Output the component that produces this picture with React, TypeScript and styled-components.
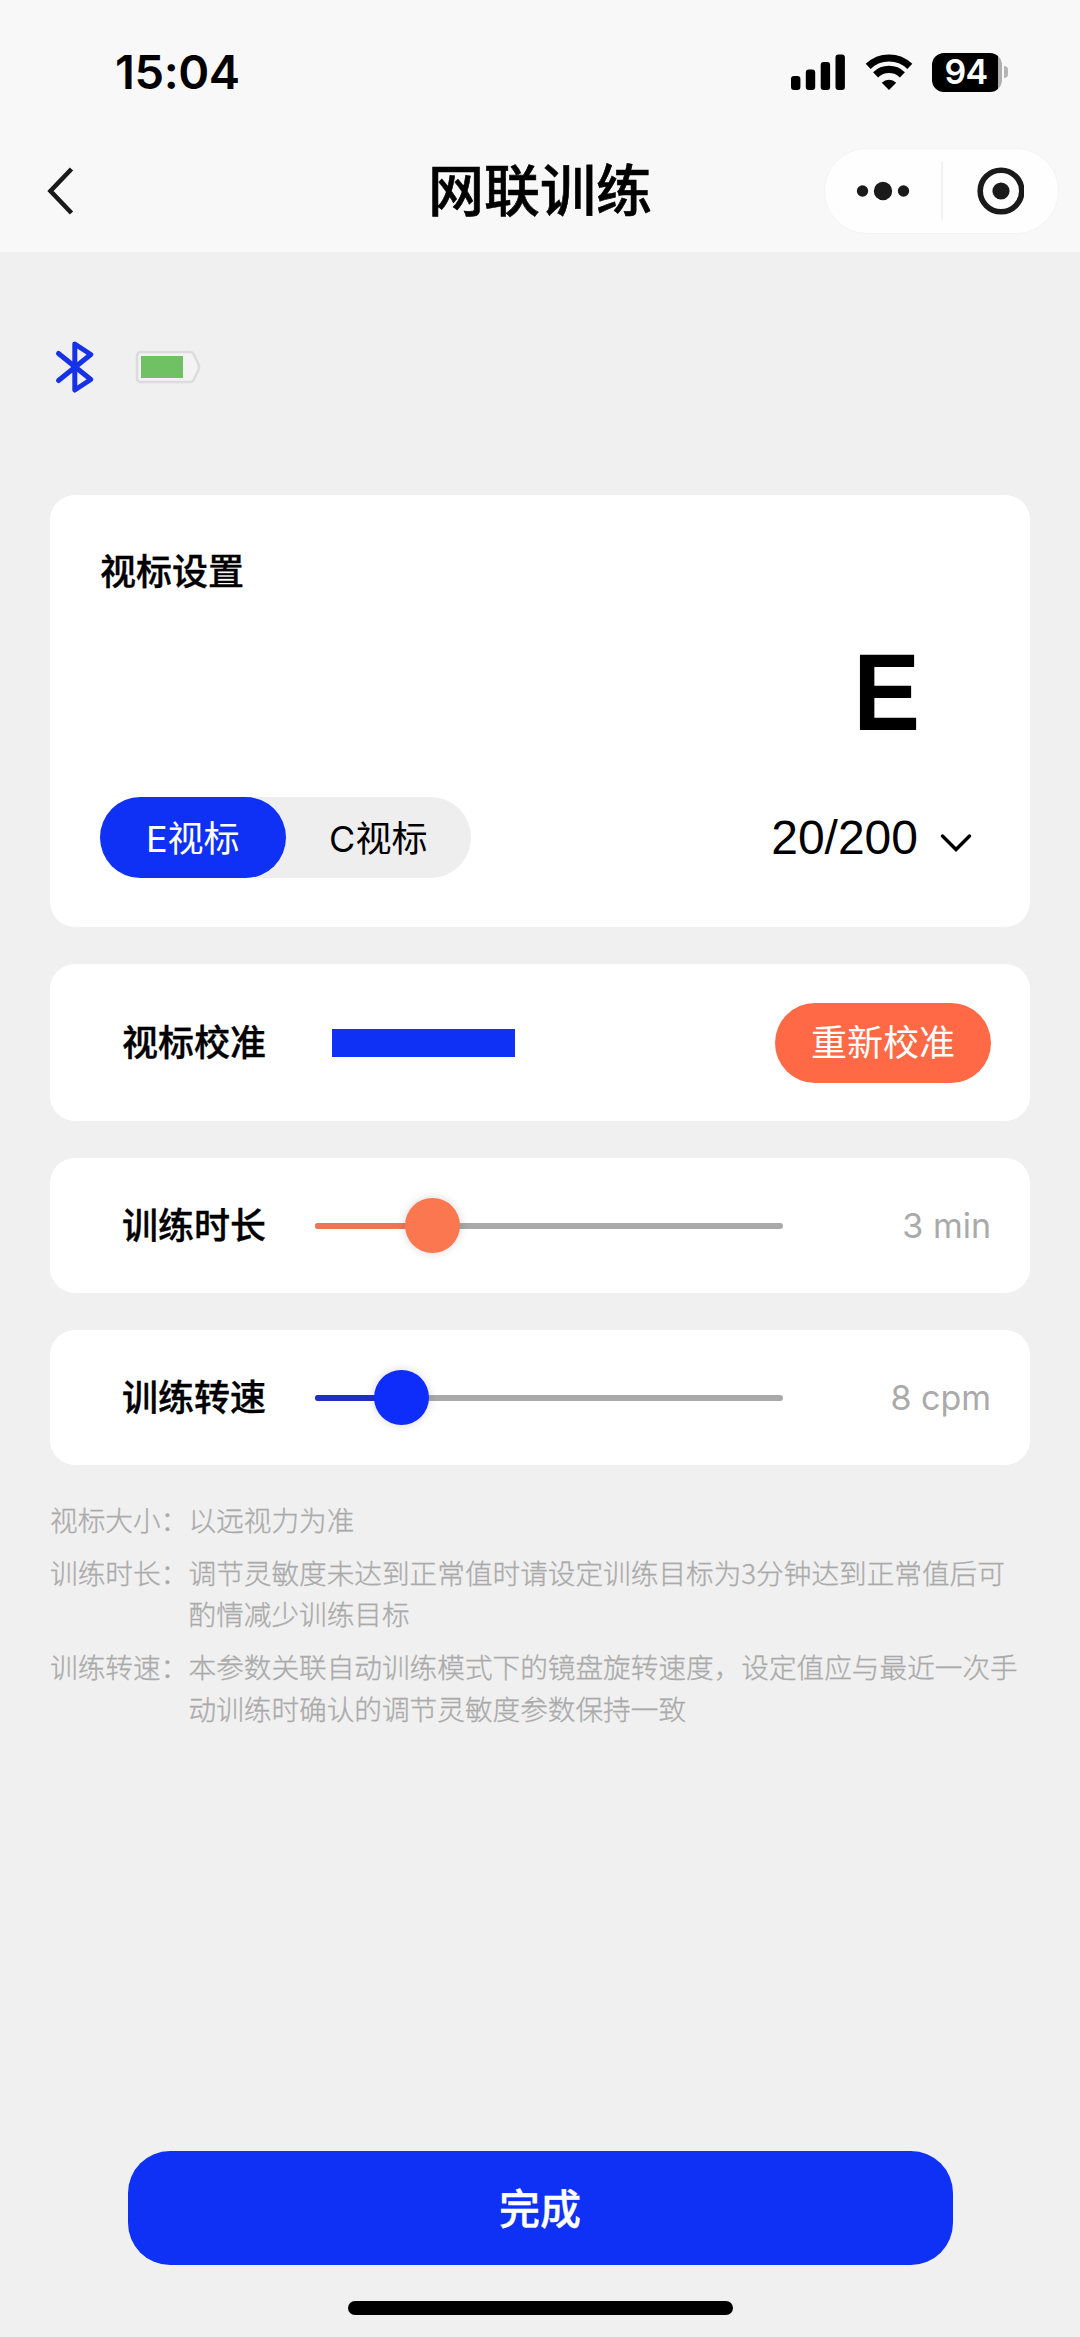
import React from "react";
import styled, { createGlobalStyle } from "styled-components";

const BLUE = "#0f31f6";
const GREY = "#aaaaaa";

const GlobalStyle = createGlobalStyle`
  *, *::before, *::after { box-sizing: border-box; }
  body {
    margin: 0;
    background: #f0f0f0;
    color: #000;
    font-family: "Liberation Sans", "Noto Sans CJK SC", sans-serif;
  }
  button { border: 0; padding: 0; font: inherit; background: none; color: inherit; }
`;

const Screen = styled.div`
  display: flex;
  flex-direction: column;
  width: 1080px;
  height: 2337px;
  background: #f0f0f0;
`;

const Header = styled.header`
  height: 252px;
  background: #f8f8f8;
`;

const StatusBar = styled.div`
  display: flex;
  align-items: center;
  justify-content: space-between;
  height: 128px;
  padding: 16px 72px 0 115px;
`;

const Clock = styled.time`
  padding-bottom: 1px;
  font: 600 47px/1 Inter, sans-serif;
  letter-spacing: -0.4px;
`;

const StatusIcons = styled.div`
  display: flex;
  align-items: center;
`;

const SignalIcon = styled.svg`
  width: 54px;
  height: 36px;
  margin-right: 20px;
`;

const WifiIcon = styled.svg`
  width: 48px;
  height: 36px;
  margin-right: 19px;
`;

const PhoneBattery = styled.div`
  display: flex;
  align-items: center;
  gap: 2px;
`;

const BatteryBody = styled.div`
  display: flex;
  align-items: center;
  justify-content: center;
  width: 70px;
  height: 39px;
  padding-right: 2px;
  border-radius: 12px;
  background: linear-gradient(to right, #000 66px, #aeaeae 66px);
  color: #fff;
  font: 600 34px/1 Inter, sans-serif;
  letter-spacing: -0.6px;
`;

const BatteryTip = styled.div`
  width: 4px;
  height: 12px;
  border-radius: 0 5px 5px 0;
  background: #b4b4b4;
`;

const NavBar = styled.div`
  display: grid;
  grid-template-columns: 1fr auto 1fr;
  align-items: center;
  height: 125px;
  padding: 0 21px 0 46px;
`;

const BackButton = styled.button`
  justify-self: start;
  display: flex;
`;

const BackIcon = styled.svg`
  width: 30px;
  height: 50px;
`;

const PageTitle = styled.h1`
  margin: 3px 25px 0 0;
  font-size: 56px;
  line-height: 70px;
  font-weight: 500;
  -webkit-text-stroke: 0.6px #000;
`;

const Capsule = styled.div`
  justify-self: end;
  display: flex;
  align-items: center;
  width: 235px;
  height: 86px;
  border: 1px solid #f4f4f4;
  border-radius: 43px;
  background: #fefefe;
`;

const CapsuleButton = styled.button`
  display: flex;
  flex: 1;
  justify-content: center;
`;

const CapsuleDivider = styled.div`
  width: 2px;
  height: 58px;
  background: #f1f1f1;
`;

const DotsIcon = styled.svg`
  width: 54px;
  height: 20px;
`;

const TargetIcon = styled.svg`
  width: 48px;
  height: 48px;
`;

const Main = styled.main`
  display: flex;
  flex: 1;
  flex-direction: column;
  padding: 0 50px;
`;

const DeviceStatus = styled.div`
  display: flex;
  align-items: center;
  gap: 40px;
  height: 243px;
  padding: 0 0 14px 4px;
`;

const BluetoothIcon = styled.svg`
  width: 41px;
  height: 54px;
`;

const DeviceBattery = styled.svg`
  width: 66px;
  height: 34px;
`;

const Cards = styled.div`
  display: flex;
  flex-direction: column;
  gap: 37px;
`;

const Card = styled.section`
  border-radius: 25px;
  background: #fff;
`;

const OptotypeCard = styled(Card)`
  display: flex;
  flex-direction: column;
  height: 432px;
  padding: 52px 50px 49px;
`;

const RowCard = styled(Card)<{ $height: number }>`
  display: flex;
  align-items: center;
  height: ${(p) => p.$height}px;
  padding: 0 39px 0 72px;
`;

const CardTitle = styled.h2`
  margin: 0;
  font-size: 36px;
  line-height: 52px;
  font-weight: 500;
  -webkit-text-stroke: 0.35px #000;
`;

const RowLabel = styled(CardTitle)`
  flex: none;
  width: 145px;
  padding-top: 2px;
`;

const Preview = styled.div`
  align-self: flex-end;
  width: 73px;
  margin: 38px 57px 0 0;
  font-size: 110px;
  line-height: 110px;
  font-weight: 700;
  transform: scaleX(0.91);
`;

const OptotypeControls = styled.div`
  display: flex;
  align-items: center;
  justify-content: space-between;
  margin-top: auto;
`;

const Segments = styled.div`
  display: flex;
  width: 371px;
  height: 81px;
  border-radius: 41px;
  background: #eeeeee;
`;

const Segment = styled.button<{ $active?: boolean }>`
  flex: 1;
  padding-bottom: 4px;
  border-radius: 41px;
  background: ${(p) => (p.$active ? BLUE : "transparent")};
  color: ${(p) => (p.$active ? "#fff" : "#000")};
  font-family: Inter, "Noto Sans CJK SC", sans-serif;
  font-size: 36px;
`;

const SizeSelect = styled.button`
  display: flex;
  align-items: center;
  gap: 22px;
  margin-right: 8px;
  font-size: 48px;
`;

const ChevronIcon = styled.svg`
  width: 32px;
  height: 20px;
  margin-top: 11px;
`;

const CalibrationBar = styled.div`
  width: 183px;
  height: 28px;
  margin-left: 65px;
  background: ${BLUE};
`;

const RecalibrateButton = styled.button`
  width: 216px;
  height: 80px;
  margin-left: auto;
  padding-bottom: 5px;
  border-radius: 40px;
  background: #ff6946;
  color: #fff;
  font-size: 36px;
`;

const SliderTrack = styled.div`
  display: flex;
  align-items: center;
  width: 468px;
  height: 6px;
  margin-left: 48px;
  border-radius: 3px;
  background: #a9a9a9;
`;

const SliderFill = styled.div<{ $width: number; $color: string }>`
  width: ${(p) => p.$width}px;
  height: 6px;
  border-radius: 3px 0 0 3px;
  background: ${(p) => p.$color};
`;

const SliderThumb = styled.div<{ $color: string }>`
  flex: none;
  width: 55px;
  height: 55px;
  margin-left: -28px;
  border-radius: 50%;
  background: ${(p) => p.$color};
  box-shadow: 0 0 10px rgba(0, 0, 0, 0.16);
`;

const SliderValue = styled.output`
  margin-left: auto;
  color: ${GREY};
  font: 400 34px/44px Inter, sans-serif;
`;

const Notes = styled.dl`
  display: grid;
  grid-template-columns: 138.5px 1fr;
  row-gap: 11.5px;
  margin: 34px 0 0;
  color: ${GREY};
  font-family: "Noto Sans CJK SC", sans-serif;
  font-size: 27.65px;
  line-height: 41.4px;
  font-weight: 300;
  -webkit-text-stroke: 0.3px ${GREY};
`;

const NoteLabel = styled.dt`
  white-space: nowrap;
`;

const NoteText = styled.dd`
  margin: 0;
`;

const Footer = styled.footer`
  display: flex;
  flex-direction: column;
  align-items: center;
  gap: 36px;
  padding-bottom: 22px;
`;

const DoneButton = styled.button`
  width: 825px;
  height: 114px;
  padding-bottom: 4px;
  border-radius: 42px;
  background: ${BLUE};
  color: #fff;
  font-size: 41px;
  font-weight: 500;
  -webkit-text-stroke: 0.4px #fff;
`;

const HomeIndicator = styled.div`
  width: 385px;
  height: 14px;
  border-radius: 7px;
  background: #000;
`;

type SliderRowProps = {
  label: string;
  value: string;
  position: number;
  fill: string;
  thumb: string;
};

function SliderRow({ label, value, position, fill, thumb }: SliderRowProps) {
  return (
    <RowCard $height={135}>
      <RowLabel>{label}</RowLabel>
      <SliderTrack>
        <SliderFill $width={position} $color={fill} />
        <SliderThumb $color={thumb} />
      </SliderTrack>
      <SliderValue>{value}</SliderValue>
    </RowCard>
  );
}

const notes = [
  ["视标大小：", "以远视力为准"],
  ["训练时长：", "调节灵敏度未达到正常值时请设定训练目标为3分钟达到正常值后可酌情减少训练目标"],
  ["训练转速：", "本参数关联自动训练模式下的镜盘旋转速度，设定值应与最近一次手动训练时确认的调节灵敏度参数保持一致"],
];

export default function App() {
  return (
    <Screen>
      <GlobalStyle />
      <Header>
        <StatusBar>
          <Clock>15:04</Clock>
          <StatusIcons>
            <SignalIcon viewBox="0 0 54 36">
              <rect x="0" y="22" width="9.4" height="14" rx="3" />
              <rect x="14.8" y="15.5" width="9.4" height="20.5" rx="3" />
              <rect x="29.7" y="8" width="9.4" height="28" rx="3" />
              <rect x="44.5" y="0.5" width="9.4" height="35.5" rx="3" />
            </SignalIcon>
            <WifiIcon viewBox="0 0 48 36">
              <g fill="none" stroke="#000" strokeWidth="7.2">
                <path d="M3.200 12.400a30 30 0 0 1 41.600 0" />
                <path d="M10.600 20.800a19.200 19.200 0 0 1 26.800 0" />
              </g>
              <path d="M24 36l-7.2-7.3a10.3 10.3 0 0 1 14.4 0z" />
            </WifiIcon>
            <PhoneBattery>
              <BatteryBody>94</BatteryBody>
              <BatteryTip />
            </PhoneBattery>
          </StatusIcons>
        </StatusBar>
        <NavBar>
          <BackButton aria-label="返回">
            <BackIcon viewBox="0 0 30 50" fill="none" stroke="#1a1a1a" strokeWidth="4.6">
              <path d="M25.5 3L4.5 25l21 22" />
            </BackIcon>
          </BackButton>
          <PageTitle>网联训练</PageTitle>
          <Capsule>
            <CapsuleButton aria-label="更多">
              <DotsIcon viewBox="0 0 54 20" fill="#1a1a1a">
                <circle cx="6.5" cy="10" r="5.7" />
                <circle cx="27" cy="10" r="9.2" />
                <circle cx="47.5" cy="10" r="5.7" />
              </DotsIcon>
            </CapsuleButton>
            <CapsuleDivider />
            <CapsuleButton aria-label="关闭">
              <TargetIcon viewBox="0 0 48 48">
                <circle cx="25" cy="24" r="20.8" fill="none" stroke="#1a1a1a" strokeWidth="5.6" />
                <circle cx="25" cy="24" r="8.6" fill="#1a1a1a" />
              </TargetIcon>
            </CapsuleButton>
          </Capsule>
        </NavBar>
      </Header>

      <Main>
        <DeviceStatus>
          <BluetoothIcon
            viewBox="0 0 41 54"
            fill="none"
            stroke="#1732e6"
            strokeWidth="5"
            strokeLinecap="round"
            strokeLinejoin="round"
          >
            <path d="M4.5 13.5L36.8 39.5 20.8 50V4l16 10.5L4.5 40.5" />
          </BluetoothIcon>
          <DeviceBattery viewBox="0 0 66 34">
            <path
              d="M6 2H55Q57.500 2 58.500 4L63 13Q65 17 63 21L58.500 30Q57.500 32 55 32H6Q2 32 2 28V6Q2 2 6 2Z"
              fill="#f3f3f3"
              stroke="#dcdcde"
              strokeWidth="2.6"
            />
            <rect x="6" y="6" width="42" height="22" fill="#6fc163" />
          </DeviceBattery>
        </DeviceStatus>

        <Cards>
          <OptotypeCard>
            <CardTitle>视标设置</CardTitle>
            <Preview>E</Preview>
            <OptotypeControls>
              <Segments>
                <Segment $active>E视标</Segment>
                <Segment>C视标</Segment>
              </Segments>
              <SizeSelect>
                20/200
                <ChevronIcon
                  viewBox="0 0 32 20"
                  fill="none"
                  stroke="#000"
                  strokeWidth="3.4"
                  strokeLinecap="round"
                >
                  <path d="M2.500 3L16 16.500 29.500 3" />
                </ChevronIcon>
              </SizeSelect>
            </OptotypeControls>
          </OptotypeCard>

          <RowCard $height={157}>
            <RowLabel>视标校准</RowLabel>
            <CalibrationBar />
            <RecalibrateButton>重新校准</RecalibrateButton>
          </RowCard>

          <SliderRow label="训练时长" value="3 min" position={118} fill="#ee7657" thumb="#fb774f" />
          <SliderRow label="训练转速" value="8 cpm" position={87} fill="#1f2fc6" thumb="#0f2dfa" />
        </Cards>

        <Notes>
          {notes.map(([label, text]) => (
            <React.Fragment key={label}>
              <NoteLabel>{label}</NoteLabel>
              <NoteText>{text}</NoteText>
            </React.Fragment>
          ))}
        </Notes>
      </Main>

      <Footer>
        <DoneButton>完成</DoneButton>
        <HomeIndicator />
      </Footer>
    </Screen>
  );
}
